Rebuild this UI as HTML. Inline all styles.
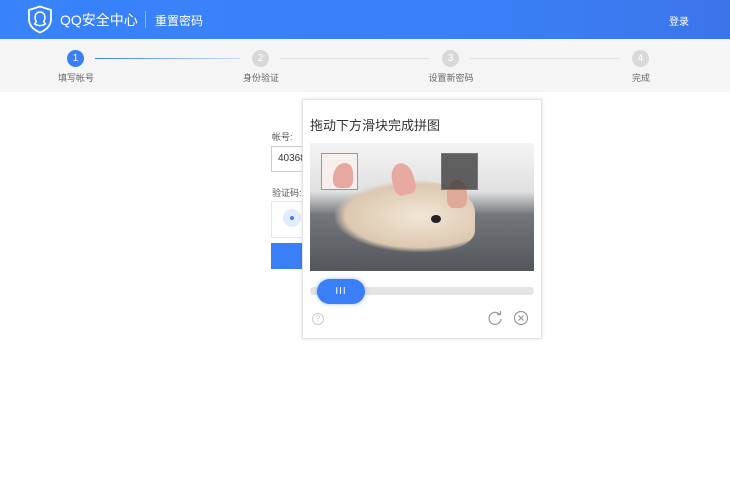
<html><head><style>
body{margin:0;width:730px;height:486px;position:relative;overflow:hidden;font-family:"Liberation Sans","Noto Sans CJK SC",sans-serif;background:#fff}
.a{position:absolute}
.hd{left:0;top:0;width:730px;height:39px;background:linear-gradient(90deg,#3883fa,#3a7ff5 70%,#3c74ea)}
.st{left:0;top:39px;width:730px;height:53px;background:#f5f5f5}
.c{width:17px;height:17px;border-radius:50%;background:#d8d8d8;color:#fff;font-size:10px;text-align:center;line-height:17px;top:50px}
.l{font-size:9px;color:#666;top:71px;width:80px;text-align:center}
</style></head><body>
<div class="a hd"></div>
<svg class="a" style="left:27px;top:5px" width="26" height="29" viewBox="0 0 26 29"><path d="M13 1.5 L24 5 V14 C24 21 19 25 13 27.5 C7 25 2 21 2 14 V5 Z" fill="none" stroke="#fff" stroke-width="1.8"/><path d="M13 7c-3.3 0-5 2.6-5 5.5 0 1.6.6 3 1.4 4l-1.8 2.5c1.5 1 3.5 1.6 5.4 1.6s3.9-.6 5.4-1.6l-1.8-2.5c.8-1 1.4-2.4 1.4-4C18 9.6 16.3 7 13 7z" fill="none" stroke="#fff" stroke-width="1.5"/></svg>
<div class="a" style="left:60px;top:10px;color:#fff;font-size:14px">QQ安全中心</div>
<div class="a" style="left:145px;top:11px;width:1px;height:17px;background:rgba(255,255,255,.4)"></div>
<div class="a" style="left:155px;top:12px;color:#fff;font-size:12px">重置密码</div>
<div class="a" style="left:669px;top:13px;color:#fff;font-size:10px">登录</div>
<div class="a st"></div>
<div class="a" style="left:95px;top:58px;width:145px;height:1px;background:linear-gradient(90deg,#3a7ff5,#cddcf8)"></div>
<div class="a" style="left:280px;top:58px;width:150px;height:1px;background:#e4e4e4"></div>
<div class="a" style="left:470px;top:58px;width:150px;height:1px;background:#e4e4e4"></div>
<div class="a c" style="left:67px;background:#3a7ff5">1</div>
<div class="a c" style="left:252px">2</div>
<div class="a c" style="left:442px">3</div>
<div class="a c" style="left:632px">4</div>
<div class="a l" style="left:36px">填写帐号</div>
<div class="a l" style="left:221px">身份验证</div>
<div class="a l" style="left:411px">设置新密码</div>
<div class="a l" style="left:601px">完成</div>
<div class="a" style="left:272px;top:130px;font-size:9px;color:#555">帐号:</div>
<div class="a" style="left:271px;top:146px;width:60px;height:24px;border:1px solid #ccc;font-size:10px;line-height:24px;text-indent:6px;color:#333">40368</div>
<div class="a" style="left:272px;top:186px;font-size:9px;color:#555">验证码:</div>
<div class="a" style="left:271px;top:201px;width:60px;height:35px;border:1px solid #e6e6e6"></div>
<div class="a" style="left:283px;top:209px;width:18px;height:18px;border-radius:50%;background:#e3ecfd"></div>
<div class="a" style="left:290px;top:216px;width:4px;height:4px;border-radius:50%;background:#3a7ff5"></div>
<div class="a" style="left:271px;top:243px;width:62px;height:26px;background:#3a7ff5"></div>
<div class="a" style="left:302px;top:99px;width:238px;height:238px;background:#fff;border:1px solid #e2e2e2;box-shadow:0 0 4px rgba(0,0,0,.12)"></div>
<div class="a" style="left:310px;top:115px;font-size:13px;color:#333">拖动下方滑块完成拼图</div>
<div class="a" style="left:310px;top:143px;width:224px;height:128px;background:linear-gradient(180deg,#f4f4f4 0%,#e0e0e0 38%,#73777c 56%,#53575c 100%)"></div>
<div class="a" style="left:335px;top:180px;width:140px;height:72px;border-radius:45% 45% 30% 30%;background:radial-gradient(ellipse at 60% 50%,#f1e6d6,#dcc8b0 62%,rgba(200,180,160,0) 72%)"></div>
<div class="a" style="left:392px;top:163px;width:22px;height:32px;border-radius:50% 50% 30% 30%;background:#e8a9a2;transform:rotate(-15deg)"></div>
<div class="a" style="left:447px;top:180px;width:20px;height:28px;border-radius:50% 50% 30% 30%;background:#e0aa98"></div>
<div class="a" style="left:431px;top:215px;width:10px;height:8px;border-radius:50%;background:#222"></div>
<div class="a" style="left:321px;top:153px;width:35px;height:35px;background:#f6efee;border:1px solid #999"></div>
<div class="a" style="left:333px;top:163px;width:20px;height:25px;border-radius:60% 40% 30% 30%;background:#e6a79f"></div>
<div class="a" style="left:441px;top:153px;width:35px;height:35px;background:rgba(60,60,60,.8);border:1px solid #777"></div>
<div class="a" style="left:310px;top:287px;width:224px;height:8px;border-radius:4px;background:#e4e4e4"></div>
<div class="a" style="left:317px;top:279px;width:48px;height:25px;border-radius:13px;background:#3a7ff5;box-shadow:0 0 4px rgba(58,127,245,.5);color:#fff;font-size:10px;text-align:center;line-height:25px;letter-spacing:1px">III</div>
<div class="a" style="left:312px;top:313px;width:10px;height:10px;border:1px solid #ccc;border-radius:50%;font-size:8px;color:#ccc;text-align:center;line-height:10px">?</div>
<svg class="a" style="left:487px;top:310px" width="16" height="16" viewBox="0 0 16 16"><path d="M13 5A6 6 0 1 0 14 9" fill="none" stroke="#999" stroke-width="1.2"/><path d="M10 4.5h3.5V1" fill="none" stroke="#999" stroke-width="1.2"/></svg>
<svg class="a" style="left:513px;top:310px" width="16" height="16" viewBox="0 0 16 16"><circle cx="8" cy="8" r="6.5" fill="none" stroke="#999" stroke-width="1.2"/><path d="M5.5 5.5l5 5M10.5 5.5l-5 5" stroke="#999" stroke-width="1.2"/></svg>
</body></html>
